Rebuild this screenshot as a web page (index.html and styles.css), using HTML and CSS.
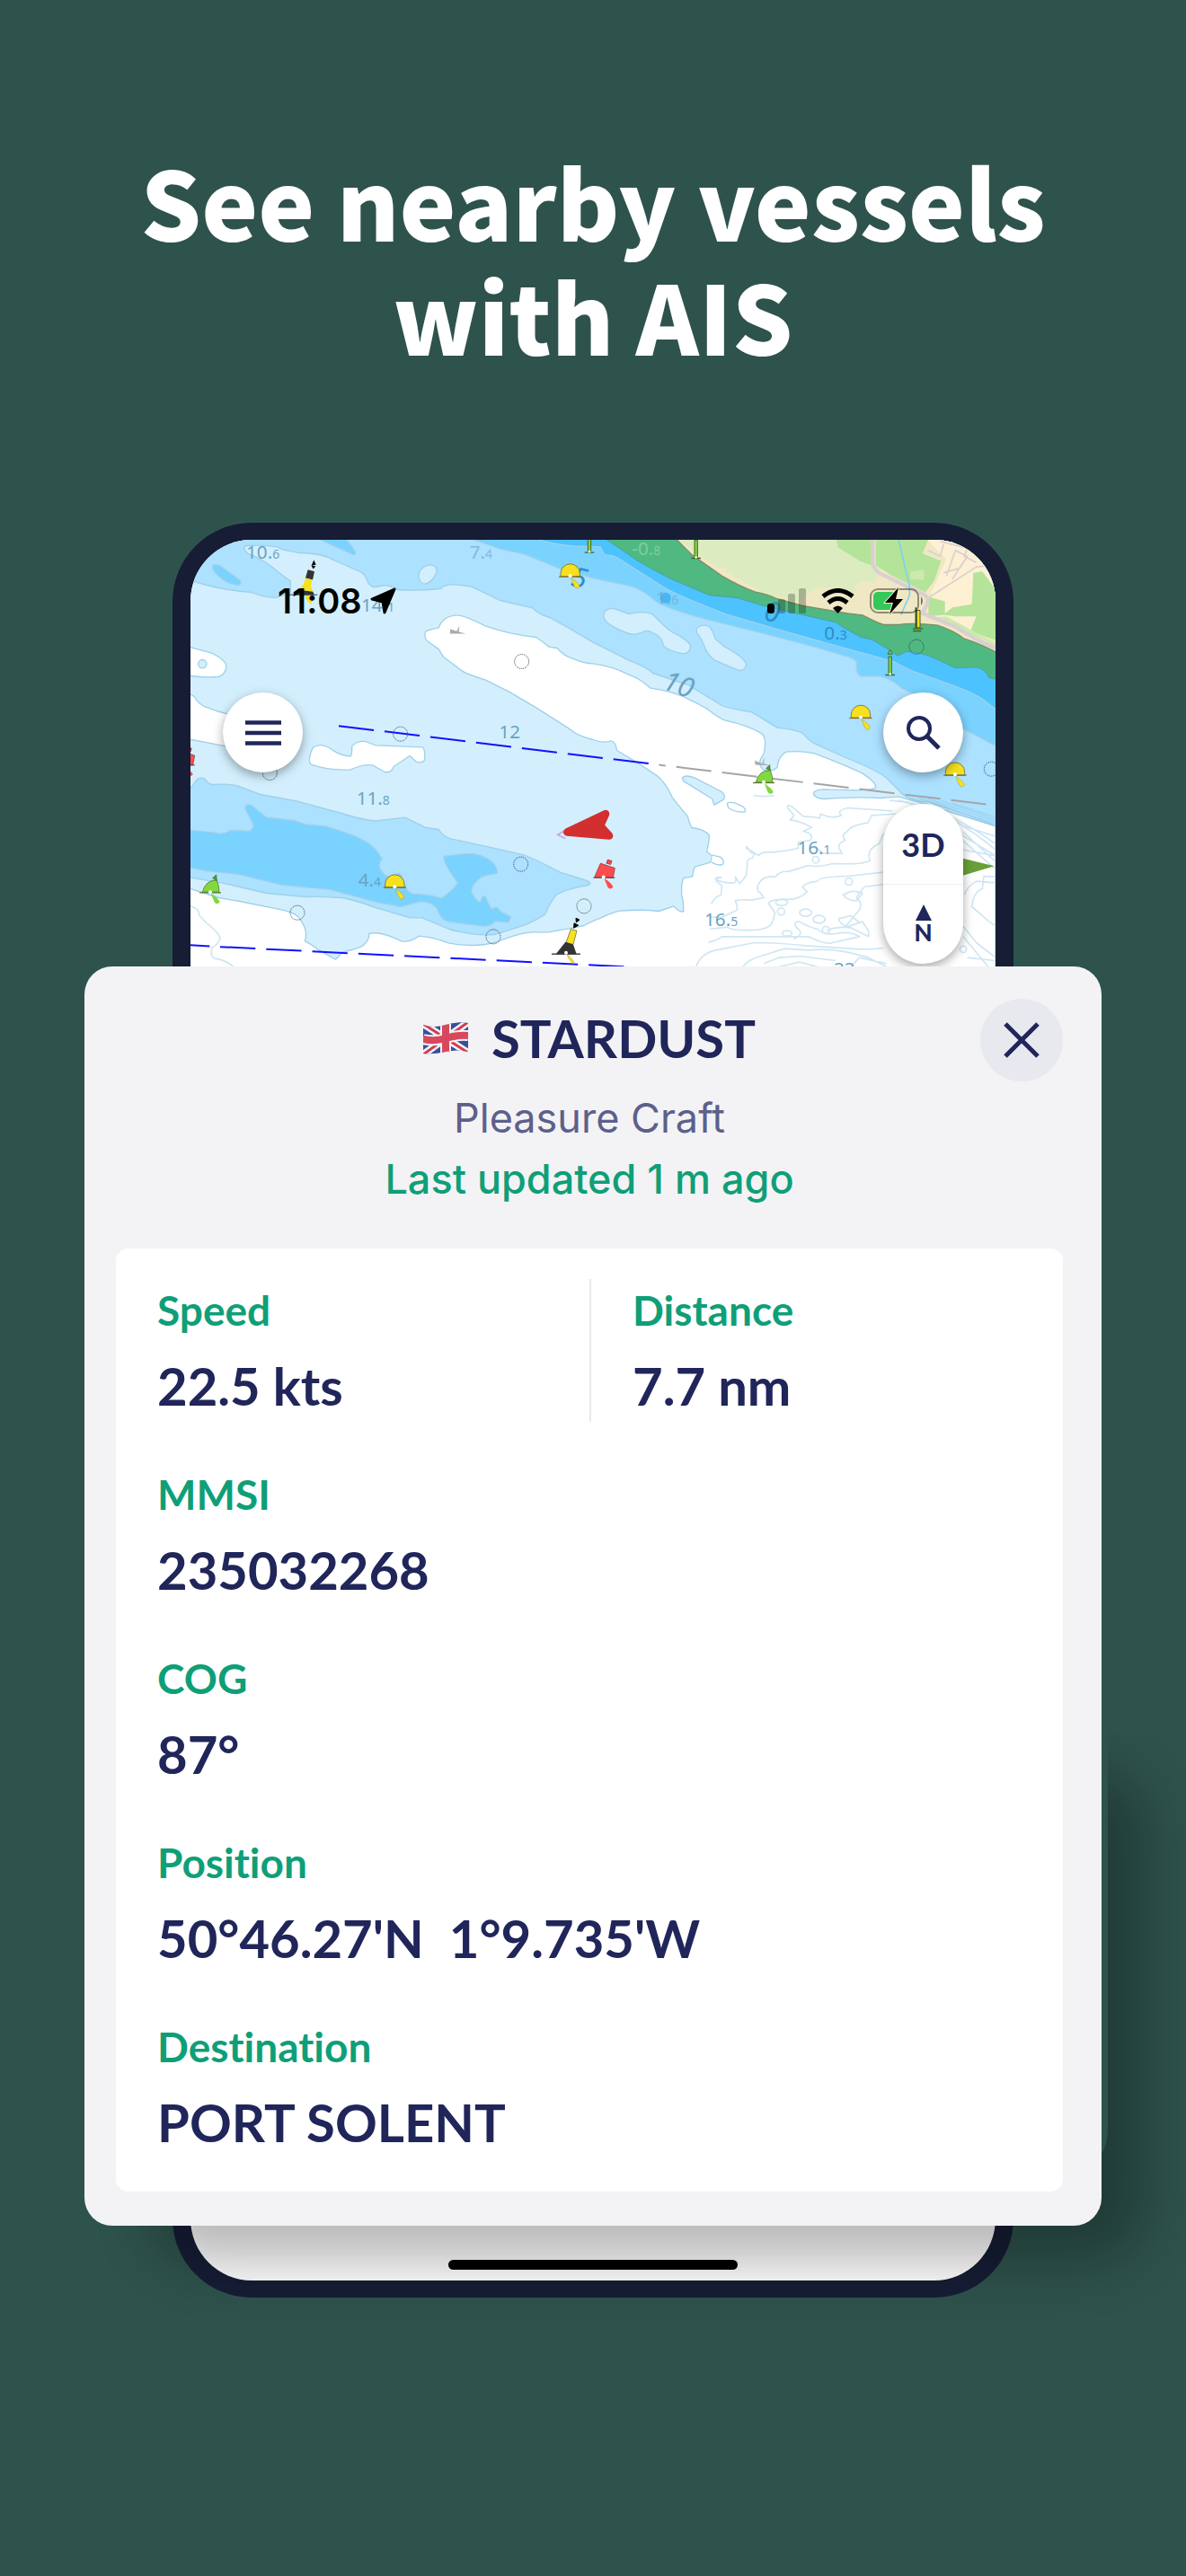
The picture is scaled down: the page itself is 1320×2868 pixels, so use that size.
FILE: index.html
```html
<!DOCTYPE html>
<html lang="en">
<head>
  <meta charset="UTF-8">
  <meta name="viewport" content="width=device-width, initial-scale=1">
  <title>See nearby vessels with AIS</title>
  <link rel="stylesheet" href="styles.css">
</head>
<body>
  <main class="promo">
    <h1 class="headline">See nearby vessels<br>with AIS</h1>

    <div class="phone">
      <div class="map">
        <!-- Nautical chart -->
        <svg class="chart" viewBox="96 93 2688 1428" preserveAspectRatio="xMidYMid slice" aria-hidden="true">
          <defs>
            <g id="tail"><path d="M2 4L14 34Q22 44 32 34Q30 22 2 4Z"/></g>
            <g id="special">
              <use href="#tail" fill="#f7e01e" stroke="#8a7d2a"/>
              <path d="M-32 0V-10A32 32 0 0 1 32 -10V0Z" fill="#f7e01e" stroke="#55512a" stroke-width="2"/>
              <path d="M-38 1H38" stroke="#8a7320" stroke-width="4"/>
              <circle r="6" cy="-2" fill="#fff"/>
            </g>
            <g id="starboard">
              <use href="#tail" fill="#80d93f"/>
              <path d="M-26 0Q-16 -40 22 -40Q30 -20 30 0Z" fill="#80d93f" stroke="#45651f" stroke-width="2"/>
              <path d="M8 -46L20 -58L22 -38Z" fill="#4e9a35" stroke="#45651f" stroke-width="2"/>
              <path d="M-36 2H36" stroke="#5f7a35" stroke-width="4"/>
              <circle r="6" fill="#fff"/>
            </g>
            <g id="port">
              <use href="#tail" fill="#ff4d4d"/>
              <path d="M-30 0L-10 -46L38 -30L32 2Z" fill="#ff4d4d" stroke="#7d2626" stroke-width="2"/>
              <path d="M14 -58L28 -54L24 -42L10 -46Z" fill="#ff4d4d" stroke="#7d2626" stroke-width="2"/>
              <path d="M-34 2H38" stroke="#5c3030" stroke-width="3"/>
              <circle r="6" fill="#fff"/>
            </g>
            <g id="pile">
              <path d="M-5 0V-58H5V0Z" fill="#80d93f" stroke="#45651f" stroke-width="3"/>
              <path d="M-16 3H16" stroke="#45651f" stroke-width="4"/>
              <circle r="4" fill="#fff"/>
            </g>
            <circle id="mark" r="24" fill="none" stroke="#2f3a45" stroke-width="3" stroke-dasharray="3 3"/>
          </defs>

          <rect x="96" y="93" width="2688" height="1428" fill="#d3effd"/>

          <g stroke="#9fd0e9" stroke-width="4" stroke-linejoin="round">
            <!-- deep water -->
            <path fill="#fff" d="M880 402Q884 396 925 388Q938 350 985 346Q1010 346 1080 382Q1160 410 1250 420Q1280 440 1292 452L1320 456Q1345 484 1370 490Q1410 508 1440 508Q1500 515 1560 545Q1600 560 1632 590Q1700 600 1740 618Q1800 645 1825 662Q1860 690 1880 697Q1960 715 2000 740Q2018 750 2014 785Q2014 810 2000 825Q1990 850 2012 864Q2036 872 2055 855Q2060 815 2085 803Q2130 798 2180 808Q2290 850 2340 875Q2386 905 2384 922Q2376 930 2320 931L2210 928Q2176 930 2176 942Q2180 958 2210 960Q2300 952 2400 957L2460 952L2784 1050V1530H90V1258L190 1290L260 1302L400 1330Q450 1340 462 1362Q490 1400 478 1435Q500 1445 520 1462L580 1496Q590 1490 600 1472Q650 1462 672 1450Q695 1430 692 1410Q730 1400 800 1435Q830 1440 858 1418Q900 1420 960 1442Q1050 1458 1120 1437Q1200 1405 1240 1405H1290L1360 1393L1410 1383Q1440 1366 1460 1360Q1500 1340 1530 1334Q1600 1328 1660 1335L1710 1318Q1728 1340 1742 1336Q1744 1310 1736 1280Q1734 1240 1743 1224L1772 1219Q1774 1200 1780 1187L1832 1172L1838 1150L1820 1136Q1828 1100 1828 1082Q1815 1062 1770 1056Q1760 1040 1756 1018Q1720 975 1705 955Q1680 900 1650 880L1590 840L1520 798Q1516 770 1500 766Q1475 775 1440 762Q1390 750 1360 725L1250 655L1160 602L1080 562Q1010 540 1000 530L940 485L925 460L890 435Q876 425 880 402Z"/>
            <path fill="#fff" d="M90 452L165 472Q215 495 216 518Q212 545 190 552Q140 556 90 548Z"/>
            <path fill="#fff" d="M90 606L108 618Q125 645 145 652Q200 675 260 684V790L215 784L90 760Z"/>
            <path fill="#fff" d="M498 845Q485 830 505 788Q535 768 575 800Q610 820 632 816Q636 806 635 784Q650 766 680 768L715 781L870 787Q880 790 878 830Q870 842 850 836L828 816L775 852Q765 875 745 870L705 848Q680 842 630 862Q560 866 498 845Z"/>
            <path fill="#d3effd" d="M1740 888Q1750 878 1780 890L1870 936Q1885 950 1876 962L1845 980L1838 960L1745 902Q1736 896 1740 888Z"/>
            <path fill="#fff" d="M1838 1148L1866 1154Q1880 1165 1874 1178Q1860 1185 1836 1172"/>
            <path fill="#fff" d="M1888 975Q1900 965 1940 985Q1955 1000 1945 1004Q1915 1005 1892 990Z"/>

            <!-- shoaling water -->
            <path fill="#ace1ff" d="M90 230L130 240Q200 262 300 270Q350 290 385 287L430 270V232Q400 212 362 180Q320 150 290 142Q268 125 280 114Q340 110 385 118Q400 130 460 138Q540 140 580 165L665 202Q680 210 690 240Q705 258 725 250Q760 240 785 261Q850 266 930 258Q950 240 985 245L1030 250Q1060 262 1130 297L1238 322Q1260 345 1295 354L1360 390L1440 437L1560 497Q1620 520 1640 540L1760 580L1870 648Q1900 660 1970 670L2055 722Q2110 728 2140 740Q2160 765 2180 775L2290 825Q2380 860 2420 890L2460 930Q2490 970 2560 970L2784 1048V85H90Z"/>
            <path fill="#ace1ff" d="M90 932L120 893Q140 885 148 898Q155 910 170 912Q240 908 262 920L330 945L450 967L600 1008Q680 1032 715 1033L812 1022L880 1055L925 1062Q940 1085 965 1093L1080 1118L1200 1145Q1230 1152 1330 1205L1410 1230Q1432 1236 1430 1244Q1424 1250 1400 1252Q1330 1270 1318 1280Q1300 1300 1280 1345Q1250 1365 1220 1378Q1150 1402 1110 1413Q1040 1418 960 1395L870 1357L830 1357L720 1325Q640 1296 600 1290Q520 1285 480 1287L350 1275L200 1240L90 1222Z"/>
            <path fill="#7ad2ff" d="M90 1064L180 1073Q205 1082 230 1065L290 1068Q310 1060 306 1045L278 990Q284 974 300 982L350 1022L440 1032L480 1045L550 1052Q640 1080 670 1097Q710 1115 735 1160Q720 1180 730 1195L745 1215L770 1222Q790 1200 800 1215Q815 1275 840 1277Q900 1280 935 1292Q985 1255 988 1238Q940 1175 942 1152Q1030 1140 1050 1145Q1120 1165 1120 1208Q1075 1215 1065 1222Q1030 1250 1034 1272Q1055 1310 1065 1303Q1070 1280 1080 1287L1100 1328L1118 1322L1134 1338L1165 1354L1158 1372L1112 1368Q1100 1385 1075 1385Q1020 1378 955 1368Q935 1365 922 1332Q908 1302 860 1302L800 1320L720 1305L560 1262L480 1255L400 1247L260 1212L150 1200L90 1188Z"/>
            <path fill="#7ad2ff" d="M170 182Q180 172 200 185L262 230Q268 242 255 246Q210 240 185 210Q168 195 170 182Z"/>
            <path fill="#7ad2ff" d="M520 90L610 130L642 145Q652 142 640 125L614 90Z"/>
            <path fill="#d3effd" d="M858 215Q860 185 895 178Q925 180 916 208Q900 240 876 242Q858 236 858 215Z"/>
            <path fill="#d3effd" d="M1476 345Q1480 322 1510 324L1560 342Q1610 330 1640 344Q1680 385 1700 400Q1760 430 1766 450Q1762 478 1735 474Q1690 465 1675 448Q1672 430 1665 423Q1640 400 1618 398Q1580 415 1560 408Q1470 375 1476 345Z"/>
            <path fill="#d3effd" d="M1786 392Q1800 375 1825 382Q1840 395 1848 425L1880 452Q1950 490 1952 512Q1946 535 1925 530L1845 496Q1820 475 1812 450Q1800 420 1786 405Z"/>
            <path fill="#7ad2ff" d="M1030 90Q1090 110 1130 125L1210 142L1340 195L1440 222L1570 250Q1620 270 1650 300Q1700 330 1840 365L2040 415L2190 455L2290 485Q2325 495 2320 510Q2318 545 2335 550L2400 550Q2440 560 2470 590L2600 650L2675 725L2790 785V90Z"/>
            <path fill="#4cc2ff" d="M1240 90Q1320 112 1380 115L1465 118Q1475 145 1485 146Q1510 145 1530 160L1640 230Q1700 270 1730 280Q1800 310 1890 345L2080 400L2240 445L2440 500L2500 530L2640 580Q2720 610 2745 630L2790 665V90Z"/>
          </g>

          <!-- drying shore -->
          <path fill="#4fb981" stroke="#4aa3a0" stroke-width="3" d="M1480 90L1590 165Q1640 195 1700 225L1830 280L1920 288L2010 315L2140 345L2250 370L2285 392L2330 418L2372 428L2440 468L2456 482L2485 468Q2540 470 2580 490L2650 522L2720 520Q2750 525 2762 555L2790 562V90Z"/>
          <!-- land -->
          <path fill="#f0e8c4" stroke="#7d8f68" stroke-width="4" d="M1716 90Q1740 115 1772 146L1870 215Q1930 250 1980 268Q2030 278 2050 290L2140 315L2290 340L2340 346Q2390 372 2410 378H2460Q2500 370 2590 380Q2640 395 2680 425Q2730 440 2790 472V90Z"/>
          <path fill="#ddecc0" d="M1722 93H2240L2400 190L2380 240Q2335 220 2320 245L2310 280Q2250 240 2180 260Q2150 275 2130 305L2050 285L1990 262L1880 200L1890 185L1860 190Z"/>
          <path fill="#fdf0d3" d="M2555 93H2784V420L2700 400L2560 340L2570 270L2620 160Z"/>
          <path fill="#b3e499" d="M2252 93H2370V180L2330 165L2258 120Z"/>
          <path fill="#b3e499" d="M2384 93H2560L2540 140L2602 165L2580 230L2550 270L2440 215L2384 180Z"/>
          <path fill="#b3e499" d="M2560 285L2615 300V345L2560 350ZM2710 205L2740 200L2784 260V430L2700 400L2720 350L2650 350L2610 345L2640 320L2705 310Z"/>
          <path fill="#cdeaae" d="M2500 200L2545 195V228L2500 226ZM2560 355L2740 425L2784 450V440L2620 350Z"/>
          <g fill="none" stroke="#dacfd1" stroke-linejoin="round">
            <path stroke-width="13" d="M2374 93V175Q2376 190 2395 205L2540 275Q2570 290 2550 320L2540 340L2650 385Q2720 430 2784 456"/>
            <path stroke-width="5" d="M2565 285L2720 185L2770 180M2560 130L2600 150L2610 110M2620 215L2650 130L2690 150L2640 225M2700 93L2680 150L2720 170M2610 205L2660 190M2600 100L2680 120"/>
          </g>
          <path d="M2460 93L2497 250V280L2468 345" fill="none" stroke="#7fd0ee" stroke-width="5"/>

          <!-- depth contours -->
          <g fill="none" stroke="#cfe6f3" stroke-width="5" stroke-linejoin="round">
            <path d="M96 1318Q125 1325 126 1350L150 1375Q190 1405 195 1425Q190 1445 170 1455Q158 1480 175 1492Q220 1500 240 1521"/>
            <path d="M2088 988Q2092 975 2112 992L2142 1018Q2190 1020 2196 1025L2200 1010Q2240 1028 2270 1015Q2250 1000 2290 990L2440 1000M2088 988L2112 1015L2098 1030Q2130 1032 2170 1055L2142 1068Q2180 1075 2166 1098L2125 1105V1125Q2080 1135 2040 1138Q2000 1135 1995 1148L1968 1140Q1950 1110 1952 1125L1980 1140L1972 1158Q1950 1160 1955 1180Q1955 1215 1945 1225L1930 1243L1915 1220Q1925 1245 1895 1240Q1860 1238 1848 1225L1868 1222Q1848 1218 1852 1235L1870 1250L1868 1280Q1842 1290 1835 1312"/>
            <path d="M2450 1010L2370 1015L2358 1040Q2300 1048 2290 1068Q2265 1080 2282 1098Q2255 1110 2262 1125L2272 1142H2205Q2190 1120 2168 1120"/>
            <path d="M2410 1075L2395 1110Q2350 1130 2365 1165Q2350 1180 2240 1176Q2190 1190 2160 1182L2095 1202Q2060 1200 2050 1220Q2010 1215 1995 1240Q1980 1265 2000 1275L2010 1290L1970 1298Q1940 1295 1915 1300Q1925 1325 1920 1332L1870 1355H1830"/>
            <path d="M2410 1205L2290 1218Q2190 1220 2190 1235Q2145 1240 2140 1255L2155 1270Q2125 1300 2080 1295Q2015 1298 2030 1315L2048 1340L2040 1370Q2030 1395 1980 1398Q1900 1400 1890 1388L1830 1395"/>
            <path d="M2410 1245L2360 1252Q2345 1245 2320 1290Q2340 1305 2330 1330L2280 1390L2340 1370L2360 1400V1420L2300 1390Q2250 1385 2220 1400M2280 1280Q2300 1260 2340 1275L2320 1300Q2290 1300 2275 1280ZM2260 1360L2300 1350L2330 1372L2290 1388Q2265 1380 2260 1360Z"/>
            <path d="M1826 1438Q1850 1435 1870 1420H2160Q2220 1450 2240 1440L2330 1420Q2300 1400 2250 1410Q2210 1415 2190 1395Q2150 1385 2130 1370Q2105 1368 2120 1390Q2150 1410 2110 1428"/>
            <path d="M1784 1521Q1800 1475 1850 1465L1980 1440Q2050 1440 2150 1450L2300 1460Q2360 1465 2410 1458M1940 1521Q1960 1495 2000 1485L2080 1460L2160 1465Q2250 1455 2360 1490L2420 1521M2010 1510L2060 1490L2130 1485L2250 1500M2060 1521L2130 1505L2190 1521M2300 1521L2330 1490L2420 1510"/>
            <path d="M2680 1280Q2690 1250 2720 1235L2784 1240M2784 1220L2745 1218L2740 1260Q2710 1270 2705 1320L2740 1350Q2760 1370 2784 1385M2676 1385L2720 1440L2784 1490M2676 1420L2760 1521M2690 1490L2780 1500"/>
            <path d="M2430 965Q2600 975 2784 1110M2460 965Q2620 990 2784 1130M2490 970L2784 1150M2676 1050L2784 1085M2676 1070L2784 1170M2676 1100L2784 1195M2676 1130L2784 1150M1976 948Q2010 955 2046 948"/>
            <circle cx="2184" cy="1163" r="11"/><circle cx="2294" cy="1236" r="12"/><circle cx="2068" cy="1336" r="12"/><ellipse cx="2070" cy="1306" rx="20" ry="10"/><ellipse cx="2195" cy="1362" rx="20" ry="13"/><circle cx="2218" cy="1398" r="12"/><ellipse cx="2150" cy="1340" rx="20" ry="12"/><ellipse cx="2088" cy="1409" rx="16" ry="9"/><circle cx="2676" cy="1462" r="11"/>
          </g>
          <g fill="none" stroke="#8fc7e6" stroke-width="2">
            <path d="M2500 958L2784 1052M2530 958L2784 1044M2560 960L2784 1036M2600 965L2784 1028M2640 975L2784 1020"/>
          </g>
          <circle cx="136" cy="509" r="14" fill="#d3effd" stroke="#9fd0e9" stroke-width="4"/>
          <circle cx="1682" cy="289" r="18" fill="#4cb4f2"/>

          <!-- tracks -->
          <g fill="none" stroke-width="6">
            <path d="M591 716L1660 846" stroke="#1111ff" stroke-dasharray="118 36"/>
            <path d="M1718 853L2760 979" stroke="#a5a5a5" stroke-dasharray="118 36"/>
            <path d="M1660 846L1682 849" stroke="#a5a5a5"/>
            <path d="M96 1448L160 1452M195 1454L1560 1521" stroke="#1111ff" stroke-dasharray="118 36"/>
          </g>

          <!-- soundings -->
          <g class="soundings">
            <text x="282" y="157">10.<tspan class="dec">6</tspan></text>
            <text x="1028" y="157" opacity=".6">7.<tspan class="dec">4</tspan></text>
            <text x="666" y="334">14.<tspan class="dec">1</tspan></text>
            <text x="1126" y="756">12</text>
            <text x="650" y="979">11.<tspan class="dec">8</tspan></text>
            <text x="656" y="1253">4.<tspan class="dec">4</tspan></text>
            <text x="2122" y="1144">16.<tspan class="dec">1</tspan></text>
            <text x="1812" y="1384">16.<tspan class="dec">5</tspan></text>
            <text x="2244" y="1550">22.<tspan class="dec">5</tspan></text>
            <text x="2212" y="426" class="shallow">0.<tspan class="dec">3</tspan></text>
            <text x="1650" y="309" opacity=".6">1.<tspan class="dec">6</tspan></text>
            <text x="1570" y="144" class="drying">-0.<tspan class="dec">8</tspan></text>
            <text x="0" y="0" class="contour" transform="translate(1668 590) rotate(20)">10</text>
            <text x="0" y="0" class="contour shallow" transform="translate(2008 362) rotate(10)">0</text>
            <text x="0" y="0" class="contour shallow" transform="translate(1362 246) rotate(15)">5</text>
          </g>

          <!-- buoys and marks -->
          <use href="#mark" x="1202" y="501"/>
          <use href="#mark" x="797" y="743"/>
          <use href="#mark" x="361" y="873"/>
          <use href="#mark" x="453" y="1340"/>
          <use href="#mark" x="1199" y="1178"/>
          <use href="#mark" x="1410" y="1318"/>
          <use href="#mark" x="1107" y="1420"/>
          <use href="#mark" x="2520" y="452"/>
          <use href="#mark" x="2770" y="860"/>
          <use href="#special" x="1364" y="217"/>
          <use href="#special" x="2334" y="689"/>
          <use href="#special" x="2649" y="880"/>
          <use href="#special" x="778" y="1255"/>
          <use href="#starboard" x="162" y="1271"/>
          <use href="#starboard" x="2010" y="904"/>
          <use href="#port" x="1475" y="1221"/>
          <use href="#port" x="72" y="845"/>
          <use href="#pile" x="1428" y="134"/>
          <use href="#pile" x="1784" y="153"/>
          <use href="#pile" x="2432" y="543"/>
          <path d="M2424 476L2432 462L2440 476Z" fill="#80d93f" stroke="#45651f" stroke-width="3"/>
          <g>
            <path d="M2521 388V330H2532V388Z" fill="#f7e01e" stroke="#55512a" stroke-width="3"/>
            <path d="M2518 390V320" stroke="#2f5a2c" stroke-width="5"/>
            <path d="M2508 391H2542M2508 399H2536" stroke="#45651f" stroke-width="4"/>
          </g>
          <g>
            <path d="M500 180L508 162L515 178ZM499 180L514 182L506 192Z"/>
            <path d="M488 194L510 200L504 228L480 222Z" fill="#333"/>
            <path d="M480 222L502 228L498 250L505 268L458 262L474 242Z" fill="#f7e01e"/>
            <path d="M458 262L505 268L510 279H440Z" fill="#333"/>
            <path d="M478 280Q482 300 498 309Q508 302 494 282Z" fill="#f7e01e"/>
            <path d="M425 278H520" stroke="#444" stroke-width="3"/>
          </g>
          <g>
            <path d="M1383 1358L1395 1364L1384 1372ZM1377 1375L1391 1382L1376 1391Z" stroke="#000" stroke-width="3"/>
            <path d="M1366 1395L1386 1400L1374 1446L1350 1440Z" fill="#f7e01e" stroke="#55512a" stroke-width="2"/>
            <path d="M1348 1438L1374 1446L1385 1478H1316Z" fill="#333"/>
            <path d="M1302 1478H1398" stroke="#333" stroke-width="4"/>
            <path d="M1352 1478Q1360 1500 1374 1510Q1386 1506 1352 1478Z" fill="#f7e01e" stroke="#8a7d2a"/>
            <circle cx="1350" cy="1474" r="6" fill="#fff"/>
          </g>
          <path d="M963 393L985 400L994 382L992 402L1016 408L963 408Z" fill="#aaa"/>
          <path d="M1980 832L2005 842L2012 820L2010 842L2032 848L1982 846Z" fill="#aaa"/>

          <!-- vessels -->
          <path d="M1345 1066L1322 1080L1348 1092" fill="none" stroke="#c9a4e0" stroke-width="5"/>
          <path d="M1354 1071L1482 1010L1464 1050L1494 1083L1354 1071Z" fill="#d32f2f" stroke="#d32f2f" stroke-width="26" stroke-linejoin="round"/>
          <path d="M2660 1155L2780 1184L2660 1220Z" fill="#689f38"/>
        </svg>

        <div class="map-overlay">
          <div class="status-bar">
            <div class="status-time">
              <span>11:08</span>
              <svg width="30" height="30" viewBox="0 0 30 30"><path d="M27 2L2 13L14 16L16 28Z" stroke="#000" stroke-width="3" stroke-linejoin="round"/></svg>
            </div>
            <div class="status-icons">
              <svg width="43" height="28" viewBox="0 0 43 28">
                <rect y="17" width="8" height="11" rx="3"/>
                <g opacity=".25"><rect x="12" y="12" width="8" height="16" rx="2"/><rect x="23" y="6" width="8" height="22" rx="2"/><rect x="35" width="8" height="28" rx="2"/></g>
              </svg>
              <svg width="37" height="28" viewBox="0 0 37 28">
                <g fill="none" stroke="#000" stroke-width="5"><path d="M2 9Q18.500 -4 35 9"/><path d="M8 16Q18.500 7 29 16"/></g>
                <path d="M13 22Q18.500 17 24 22L18.500 28Z"/>
              </svg>
              <svg width="61" height="30" viewBox="0 0 61 30">
                <rect x="1" y="2" width="53" height="26" rx="8" fill="none" stroke="#000" stroke-opacity=".4" stroke-width="2"/>
                <rect x="4" y="5" width="25" height="20" rx="5" fill="#34c759"/>
                <path d="M57 10Q61 15 57 20Z" opacity=".5"/>
                <path d="M32 0L17 17H26L22 30L37 13H29Z" stroke="#f0e8c4" stroke-width="2" paint-order="stroke"/>
              </svg>
            </div>
          </div>

          <div class="map-controls">
            <button class="round-button" type="button" aria-label="Menu">
              <svg width="42" height="28" viewBox="0 0 42 28"><path d="M1 2.500H41M1 14H41M1 25.500H41" stroke="#20265a" stroke-width="4.500"/></svg>
            </button>
            <div class="right-controls">
              <button class="round-button" type="button" aria-label="Search">
                <svg width="40" height="40" viewBox="0 0 40 40" fill="none" stroke="#20265a"><circle cx="15" cy="15" r="12" stroke-width="4"/><path d="M24 24L37 37" stroke-width="5"/></svg>
              </button>
              <div class="view-controls">
                <button type="button">3D</button>
                <button type="button" aria-label="Point north">
                  <svg width="18" height="18" viewBox="0 0 18 18"><path d="M9 0L18 18H0Z" fill="#20265a"/></svg>
                  <span class="north">N</span>
                </button>
              </div>
            </div>
          </div>
        </div>
      </div>

      <div class="sheet-wrap">
        <section class="sheet">
          <header class="sheet-header">
            <h2 class="vessel-name">
              <svg class="flag" width="50" height="38" viewBox="0 0 50 38" role="img" aria-label="United Kingdom">
                <clipPath id="flag-shape"><path d="M0 4Q12 8 25 4T50 2V34Q38 31 25 34T0 36Z"/></clipPath>
                <g clip-path="url(#flag-shape)">
                  <rect width="50" height="38" fill="#36509a"/>
                  <path d="M0 3L50 35M50 1L0 37" stroke="#f3f3f6" stroke-width="8"/>
                  <path d="M0 3L50 35M50 1L0 37" stroke="#d23c50" stroke-width="3"/>
                  <path d="M25 0V38M0 20Q12 23 25 19T50 16" fill="none" stroke="#f3f3f6" stroke-width="12"/>
                  <path d="M25 0V38M0 20Q12 23 25 19T50 16" fill="none" stroke="#d8485c" stroke-width="8"/>
                </g>
              </svg>
              STARDUST
            </h2>
            <button class="close-button" type="button" aria-label="Close">
              <svg width="44" height="44" viewBox="0 0 44 44"><path d="M4 4L40 40M40 4L4 40" stroke="#20265a" stroke-width="5"/></svg>
            </button>
            <p class="vessel-type">Pleasure Craft</p>
            <p class="updated">Last updated 1 m ago</p>
          </header>

          <dl class="details">
            <div class="detail">
              <dt>Speed</dt>
              <dd>22.5 kts</dd>
            </div>
            <div class="detail divided">
              <dt>Distance</dt>
              <dd>7.7 nm</dd>
            </div>
            <div class="detail wide">
              <dt>MMSI</dt>
              <dd>235032268</dd>
            </div>
            <div class="detail wide">
              <dt>COG</dt>
              <dd>87°</dd>
            </div>
            <div class="detail wide">
              <dt>Position</dt>
              <dd>50°46.27'N&nbsp; 1°9.735'W</dd>
            </div>
            <div class="detail wide">
              <dt>Destination</dt>
              <dd>PORT SOLENT</dd>
            </div>
          </dl>
        </section>
      </div>

      <div class="phone-bottom">
        <div class="home-indicator"></div>
      </div>
    </div>
  </main>
</body>
</html>
```
FILE: styles.css
```css
* {
  box-sizing: border-box;
}

body {
  margin: 0;
  min-height: 100vh;
  background: #2e534c;
  color: #20265a;
  font-family: "Lato", "Noto Sans", sans-serif;
  font-variant-ligatures: none;
  overflow-x: hidden;
}

h1, h2, p, dl, dd {
  margin: 0;
}

button {
  border: 0;
  padding: 0;
  color: inherit;
  font-family: inherit;
  cursor: pointer;
}

svg {
  display: block;
  flex: none;
}

.promo {
  padding: 160px 94px;
}

.headline {
  color: #fff;
  font-family: "Noto Sans CJK SC", "Noto Sans", sans-serif;
  font-size: 106px;
  font-weight: 900;
  line-height: 127px;
  text-align: center;
}

/* Phone frame */
.phone {
  margin: 168px 98px 0;
  border: 20px solid #161d35;
  border-width: 19px 20px;
  border-radius: 88px;
  background: #fff;
}

.map {
  position: relative;
  height: 475px;
  border-radius: 68px 68px 0 0;
  overflow: hidden;
}

.chart {
  width: 100%;
  height: 100%;
}

.soundings {
  fill: #6aa3c2;
  font-family: "Noto Sans", sans-serif;
  font-size: 62px;
}

.soundings .dec {
  font-size: 42px;
}

.soundings .contour {
  font-size: 92px;
  font-style: italic;
}

.soundings .shallow {
  fill: #2f8cc4;
}

.soundings .drying {
  fill: #7fcda3;
}

/* Everything that floats on the chart */
.map-overlay {
  position: absolute;
  inset: 0;
  padding-top: 48px;
}

.status-bar,
.status-time,
.status-icons {
  display: flex;
  align-items: center;
}

.status-bar {
  justify-content: space-between;
  height: 40px;
  padding: 0 79px 0 97px;
}

.status-time {
  gap: 9px;
  color: #000;
  font-family: "Inter", sans-serif;
  font-size: 38px;
  font-weight: 600;
}

.status-icons {
  gap: 17px;
}

.map-controls {
  display: flex;
  justify-content: space-between;
  align-items: flex-start;
  padding: 82px 36px 0;
}

.right-controls {
  display: grid;
  gap: 35px;
}

.round-button,
.view-controls {
  width: 89px;
  border-radius: 45px;
  background: #fff;
  box-shadow: 0 4px 12px rgba(0, 0, 0, 0.35);
}

.round-button {
  display: grid;
  place-items: center;
  height: 89px;
}

.view-controls {
  overflow: hidden;
}

.view-controls button {
  display: flex;
  flex-direction: column;
  align-items: center;
  justify-content: center;
  width: 100%;
  height: 89px;
  background: none;
  font-size: 36px;
  font-weight: 700;
}

.view-controls button + button {
  border-top: 1px solid #f0f0f4;
}

.view-controls .north {
  font-size: 26px;
  font-weight: 900;
  line-height: 26px;
}

/* Vessel sheet, wider than the phone */
.sheet-wrap {
  position: relative;
  margin: 0 -118px;
}

.sheet-wrap::before {
  content: "";
  position: absolute;
  left: 30px;
  right: -7px;
  top: 804px;
  bottom: 48px;
  border-radius: 60px;
  box-shadow: 42px 90px 60px rgba(0, 0, 0, 0.28);
  clip-path: inset(46px -100px -200px -30px);
}

.sheet {
  position: relative;
  padding: 36px 43px 38px 35px;
  border-radius: 31px;
  background: #f3f3f6;
}

.sheet-header {
  display: grid;
  grid-template-columns: 92px 1fr 92px;
  text-align: center;
}

.vessel-name {
  grid-column: 2;
  display: flex;
  align-items: center;
  align-self: start;
  justify-content: center;
  gap: 26px;
  font-size: 58px;
  font-weight: 700;
  line-height: 88px;
}

.close-button {
  display: grid;
  place-items: center;
  width: 92px;
  height: 92px;
  border-radius: 50%;
  background: #e8e9ef;
}

.vessel-type,
.updated {
  grid-column: 1 / -1;
  font-family: "Inter", sans-serif;
  font-size: 45px;
  line-height: 68px;
}

.vessel-type {
  padding-top: 7px;
  color: #5d608a;
}

.updated {
  color: #0f9f78;
  font-weight: 500;
}

.details {
  display: grid;
  grid-template-columns: 1fr 1fr;
  row-gap: 46px;
  margin-top: 43px;
  padding: 34px 0 37px;
  border-radius: 14px;
  background: #fff;
}

.detail {
  padding: 0 46px;
}

.divided {
  border-left: 2px solid #e8e8ee;
}

.wide {
  grid-column: 1 / -1;
}

.detail dt {
  color: #0f9f78;
  font-size: 46px;
  font-weight: 700;
  line-height: 70px;
}

.detail dd {
  padding-top: 9px;
  font-size: 58px;
  font-weight: 700;
  line-height: 80px;
}

.phone-bottom {
  display: flex;
  justify-content: center;
  padding: 38px 0 12px;
}

.home-indicator {
  position: relative;
  width: 36%;
  height: 11px;
  border-radius: 6px;
  background: #000;
}
```
